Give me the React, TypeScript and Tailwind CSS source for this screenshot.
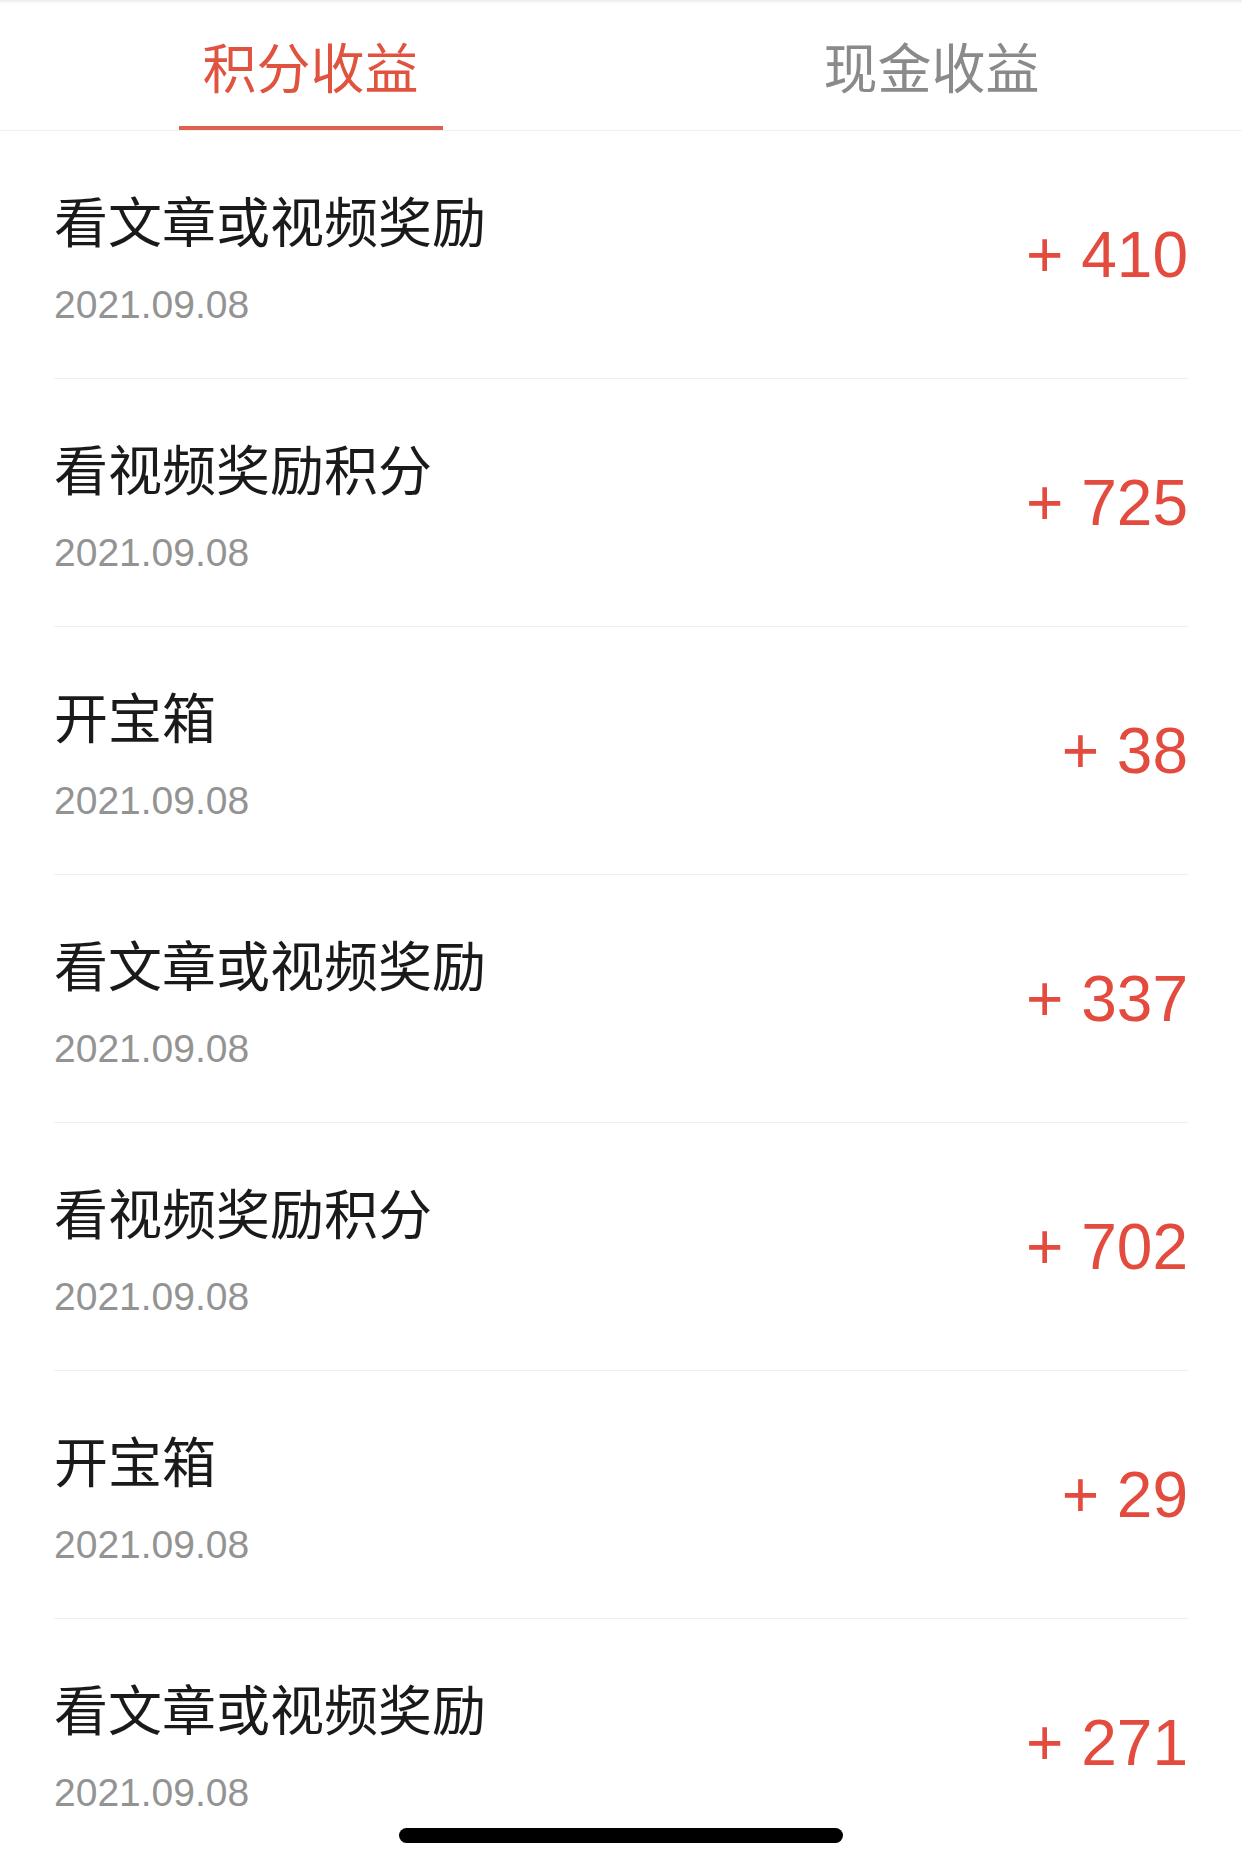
const RECORDS = [
  { title: "看文章或视频奖励", date: "2021.09.08", amount: 410 },
  { title: "看视频奖励积分", date: "2021.09.08", amount: 725 },
  { title: "开宝箱", date: "2021.09.08", amount: 38 },
  { title: "看文章或视频奖励", date: "2021.09.08", amount: 337 },
  { title: "看视频奖励积分", date: "2021.09.08", amount: 702 },
  { title: "开宝箱", date: "2021.09.08", amount: 29 },
  { title: "看文章或视频奖励", date: "2021.09.08", amount: 271 },
] as const;

const TABS = ["积分收益", "现金收益"] as const;

const CJK = "font-['Noto_Sans_CJK_SC','Noto_Sans',sans-serif]";
const NUM = "font-['Liberation_Sans',Arial,sans-serif]";

export default function App() {
  return (
    <div className="relative h-[1868px] w-full overflow-hidden bg-white">
      {/* Tabs */}
      <div className="h-[4px] bg-gradient-to-b from-[#ececec] to-white" />
      <div className="flex border-b border-[#f1f1f1]">
        {TABS.map((tab, i) => {
          const active = i === 0;
          return (
            <div key={tab} className="flex flex-1 flex-col items-center pt-[31px]">
              <span
                className={`${CJK} text-[54px] leading-[62px] ${
                  active ? "text-[#e0543f]" : "text-[#8a8a8a]"
                }`}
              >
                {tab}
              </span>
              <div
                className={`mt-[29px] h-[4px] w-[264px] ${
                  active ? "bg-[#e0604f]" : "bg-transparent"
                }`}
              />
            </div>
          );
        })}
      </div>

      {/* Records */}
      <div className="flex flex-col">
        {RECORDS.map((r, i) => (
          <div
            key={i}
            className={`mx-[54px] flex h-[248px] shrink-0 items-start justify-between ${
              i < RECORDS.length - 1 ? "border-b border-[#efefef]" : ""
            }`}
          >
            <div className="flex flex-col pt-[58px]">
              <span className={`${CJK} text-[54px] leading-[62px] text-[#1a1a1a]`}>
                {r.title}
              </span>
              <span className={`${NUM} mt-[32px] text-[39px] leading-[44px] text-[#939393]`}>
                {r.date}
              </span>
            </div>
            <span className={`${NUM} self-center text-[64px] leading-none text-[#e24b3e]`}>
              + {r.amount}
            </span>
          </div>
        ))}
      </div>

      {/* Home indicator */}
      <div className="absolute bottom-[25px] left-1/2 h-[15px] w-[444px] -translate-x-1/2 rounded-full bg-black" />
    </div>
  );
}
